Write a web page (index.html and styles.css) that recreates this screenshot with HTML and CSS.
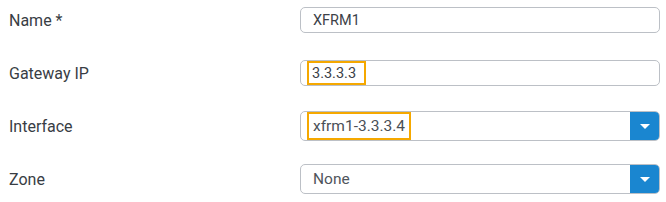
FILE: index.html
```html
<!DOCTYPE html>
<html>
<head>
<meta charset="utf-8">
<link rel="stylesheet" href="styles.css">
</head>
<body>
<div class="form">
  <div class="row">
    <div class="label">Name *</div>
    <div class="field text"><span class="value">XFRM1</span></div>
  </div>
  <div class="row">
    <div class="label">Gateway IP</div>
    <div class="field text hl-field"><span class="value hl">3.3.3.3</span></div>
  </div>
  <div class="row">
    <div class="label">Interface</div>
    <div class="field select hl-field"><span class="value hl">xfrm1-3.3.3.4</span><span class="btn"><span class="tri"></span></span></div>
  </div>
  <div class="row">
    <div class="label">Zone</div>
    <div class="field select"><span class="value muted">None</span><span class="btn"><span class="tri"></span></span></div>
  </div>
</div>
</body>
</html>
```
FILE: styles.css
```css
html, body {
  margin: 0;
  padding: 0;
  background: #ffffff;
}
body {
  width: 666px;
  height: 202px;
  overflow: hidden;
  font-family: Roboto, "Liberation Sans", sans-serif;
}
.form {
  display: flex;
  flex-direction: column;
  gap: 13px;
}
.row {
  display: flex;
  align-items: center;
  height: 40px;
}
.label {
  width: 300px;
  flex: none;
  padding-left: 9px;
  box-sizing: border-box;
  font-size: 16px;
  color: #383d44;
}
.field {
  width: 360px;
  flex: none;
  box-sizing: border-box;
  border: 1px solid #bcc0c6;
  border-radius: 5px;
  display: flex;
  align-items: center;
  padding-left: 12px;
  position: relative;
}
.field.text {
  height: 26px;
  font-size: 14.5px;
  color: #3c4148;
}
.field.select {
  height: 30px;
  font-size: 15.5px;
  color: #4a4f56;
  overflow: hidden;
}
.field.hl-field {
  padding-left: 6px;
}
.value.hl {
  border: 2px solid #f5a800;
  height: 100%;
  box-sizing: border-box;
  display: flex;
  align-items: center;
  padding: 0 8px 0 3px;
}
.select .value.hl {
  padding: 0 4px 0 4px;
}
.muted {
  color: #50555c;
}
.btn {
  margin-left: auto;
  width: 30px;
  height: 30px;
  margin-top: -1px;
  margin-bottom: -1px;
  margin-right: -1px;
  background: #1a86d0;
  border-radius: 0 5px 5px 0;
  display: flex;
  align-items: center;
  justify-content: center;
}
.tri {
  width: 0;
  height: 0;
  border-left: 5px solid transparent;
  border-right: 5px solid transparent;
  border-top: 5px solid #ffffff;
}
```
